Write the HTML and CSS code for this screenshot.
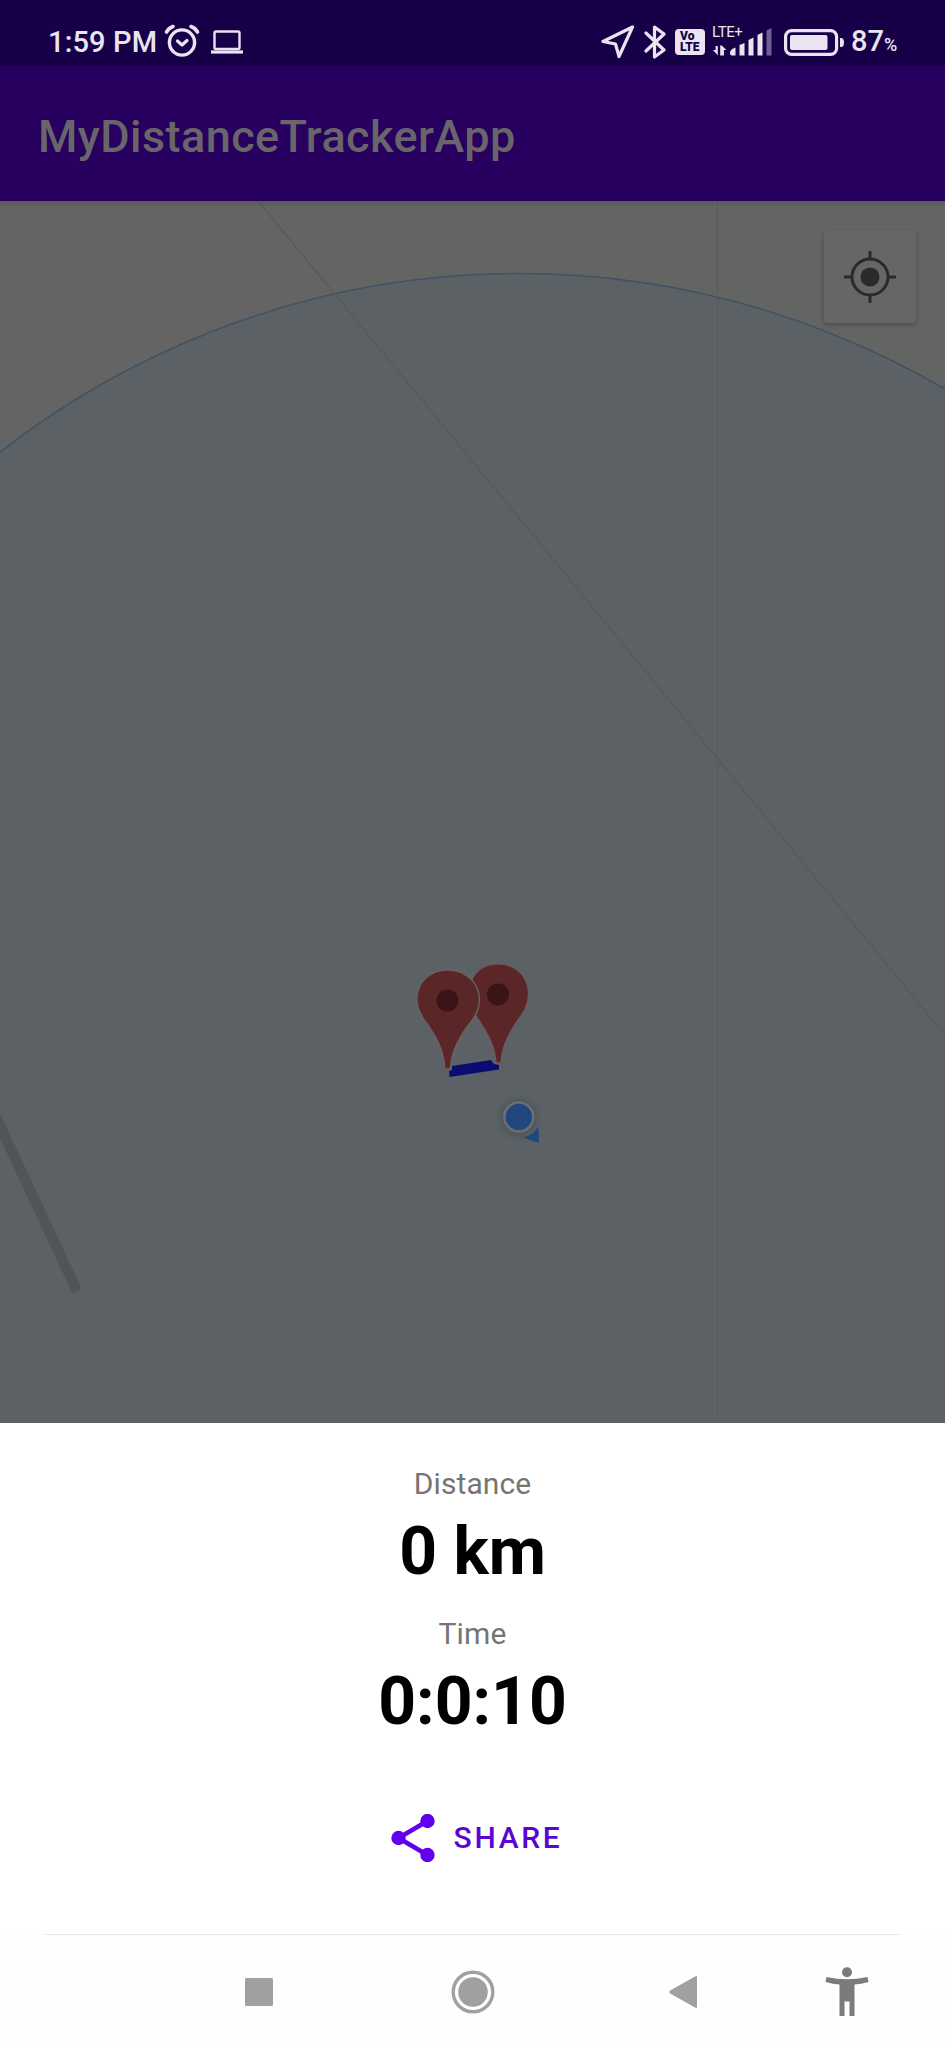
FILE: index.html
```html
<!DOCTYPE html>
<html lang="en">
<head>
<meta charset="utf-8">
<title>MyDistanceTrackerApp</title>
<link rel="stylesheet" href="styles.css">
</head>
<body>
<div class="screen">
  <header class="status">
    <span class="clock">1:59 PM</span>
    <svg class="alarm" width="36" height="34" viewBox="0 0 36 34" fill="none" stroke="#e9e4f0" stroke-linecap="round">
      <circle cx="18" cy="18.500" r="12.600" stroke-width="3.400"/>
      <path d="M2.500 8C4 5.500 6 3.500 9 2.500M33.500 8C32 5.500 30 3.500 27 2.500" stroke-width="3.600"/>
      <path d="M13.500 17l4.500 4 5-4.500" stroke-width="3.200" stroke-linejoin="round"/>
    </svg>
    <svg class="laptop" width="32" height="24" viewBox="0 0 32 24" fill="none" stroke="#e9e4f0">
      <rect x="3.500" y="1.500" width="25" height="17.500" rx="1.500" stroke-width="2.400"/>
      <path d="M0 22h32" stroke-width="3.200"/>
    </svg>
    <span class="spacer"></span>
    <svg class="location" width="34" height="34" viewBox="0 0 34 34" fill="none" stroke="#e9e4f0" stroke-width="3.200" stroke-linejoin="round">
      <path d="M31.500 2L2 16.500l12.500 2.500 3.500 12.500z"/>
    </svg>
    <svg class="bluetooth" width="22" height="34" viewBox="0 0 22 34" fill="none" stroke="#e9e4f0" stroke-width="3.200" stroke-linejoin="round" stroke-linecap="round">
      <path d="M2 8l18 17-9.500 7V2l9.500 7L2 26"/>
    </svg>
    <span class="volte"><span>Vo</span><span>LTE</span></span>
    <span class="mobile">
      <span class="network">LTE+</span>
      <svg width="59" height="28" viewBox="0 0 59 28" fill="#e9e4f0">
        <path d="M0 22h2.600v-4h2.200v9.500zM7.200 17.500h2v.5l4.300 4h-2.600v5.500H7.200z"/>
        <path d="M17 25q0-4 5.500-5.500v8H19q-2 0-2-2.500zM26.500 17l5-2v12.500h-5zM35.500 12l5-2.500v18h-5zM44.500 7l5-2.500v23h-5z"/>
        <path d="M53.500 2.500L58.500 0v27.500h-5z" fill="#6f6093"/>
      </svg>
    </span>
    <svg class="battery" width="60" height="27" viewBox="0 0 60 27" fill="#e9e4f0">
      <rect x="1.600" y="1.600" width="51" height="23.800" rx="6" fill="none" stroke="#e9e4f0" stroke-width="3.200"/>
      <rect x="6" y="6" width="37.500" height="15" rx="2"/>
      <path d="M56 9h1q3 0 3 4.500T57 18h-1z"/>
    </svg>
    <span class="charge">87<small>%</small></span>
  </header>

  <div class="appbar"><h1>MyDistanceTrackerApp</h1></div>

  <main class="map">
    <svg class="canvas" width="945" height="1222" viewBox="0 201 945 1222">
      <rect y="201" width="945" height="1222" fill="#646464"/>
      <path d="M258 201H945V1035z" fill="#636563"/>
      <circle cx="519" cy="1116" r="842.500" fill="#5b6164" stroke="#405365" stroke-width="1.600"/>
      <path d="M258 201L945 1035" stroke="#535a5b" stroke-width="1.100" fill="none"/>
      <path d="M717.500 201V1423" stroke="#565c5e" stroke-width="1" fill="none"/>
      <path d="M-6 1113L77 1291" stroke="#505658" stroke-width="10.500"/>
      <path d="M0 1334L70 1300" stroke="#585e61"/>
      <g fill="#5a2627" stroke="#715b5d" stroke-width="1">
        <path d="M496 1062C495.500 1045 485 1029 475 1014C462 991 472 964 498 964S537 991 522 1014C511 1029 501.500 1045 501 1062Q498.500 1064 496 1062z"/>
        <path d="M444.500 1068C444.500 1050 434.500 1034 423.500 1019C408 995 422 970 447.500 970S489 995 473 1019C461 1034 451 1050 450.500 1068Q447.500 1070 444.500 1068z" stroke="#6b6263" stroke-width="1.400"/>
      </g>
      <circle cx="498" cy="994.500" r="11" fill="#3b1418"/>
      <circle cx="447.500" cy="1000.500" r="11" fill="#3b1418"/>
      <path d="M452 1066l39-6 3 4 5 1v4.500l-49.500 7.500-.5-6 3-1z" fill="#0b0c71"/>
      <circle class="halo" cx="518.500" cy="1117.500" r="18" fill="#4b5356"/>
      <path d="M538.500 1126.500l.5 16.500-16-5.500q10-2 15.500-11z" fill="#224681"/>
      <circle cx="518.800" cy="1117" r="14.500" fill="#22477f" stroke="#6d6e70" stroke-width="2.600"/>
    </svg>
    <button class="locate" aria-label="My location">
      <svg width="52" height="52" viewBox="0 0 52 52" fill="none" stroke="#2a2a2a" stroke-width="3">
        <circle cx="26" cy="26" r="18"/>
        <circle cx="26" cy="26" r="9.500" fill="#2a2a2a" stroke="none"/>
        <path d="M26 0v8M26 44v8M0 26h8M44 26h8"/>
      </svg>
    </button>
  </main>

  <section class="sheet">
    <div class="label">Distance</div>
    <div class="value">0 km</div>
    <div class="label second">Time</div>
    <div class="value">0:0:10</div>
    <button class="share">
      <svg width="44" height="48" viewBox="0 0 44 48" fill="#6200ee">
        <path d="M36.500 7L7.500 24l29 17" fill="none" stroke="#6200ee" stroke-width="4.600"/>
        <circle cx="36.500" cy="7" r="7.200"/><circle cx="7.500" cy="24" r="7.200"/><circle cx="36.500" cy="41" r="7.200"/>
      </svg>
      <span>SHARE</span>
    </button>
  </section>

  <nav class="navbar">
    <svg class="recent" width="28" height="28" viewBox="0 0 28 28"><rect width="28" height="28" rx="1.500" fill="#a0a0a0"/></svg>
    <svg class="home" width="44" height="44" viewBox="0 0 44 44"><circle cx="22" cy="22" r="19.800" fill="none" stroke="#a0a0a0" stroke-width="3.400"/><circle cx="22" cy="22" r="14.800" fill="#a0a0a0"/></svg>
    <svg class="back" width="29" height="34" viewBox="0 0 29 34"><path d="M2 16L27 2v30L2 18q-1-1 0-2z" fill="#a0a0a0" stroke="#a0a0a0" stroke-width="2" stroke-linejoin="round"/></svg>
    <svg class="access" width="44" height="49" viewBox="0 0 44 49" fill="#7b7b7b"><circle cx="22" cy="5.200" r="5"/><path d="M1.500 10Q22 14.500 42.500 10l1 5Q36 17 29.500 17.500V49h-5V34.500h-5V49h-5V17.500Q8 17 .5 15z"/></svg>
  </nav>
</div>
</body>
</html>
```

FILE: styles.css
```css
* { box-sizing: border-box; }
body { margin: 0; background: #fefefe; font-family: Roboto, "Liberation Sans", sans-serif; }
button { border: 0; padding: 0; font: inherit; background: none; }
svg { display: block; flex: none; }
.screen { width: 945px; height: 2048px; display: flex; flex-direction: column; overflow: hidden; }

.status { height: 66px; flex: none; display: flex; align-items: center; padding: 18px 47px 0 48px; background: #170048; color: #e9e4f0; white-space: nowrap; }
.clock { width: 116px; font-size: 29px; font-weight: 500; line-height: 34px; letter-spacing: .15px; }
.alarm { margin: -2px 11px 0 0; }
.spacer { flex: 1; }
.location { margin-right: 9px; }
.bluetooth { margin: -1px 9px 0 0; }
.volte { width: 30px; height: 26px; margin-right: 8px; padding: 2px 0 0 5px; border-radius: 4px; background: #e9e4f0; color: #170048; font-size: 12px; line-height: 11px; font-weight: 900; display: flex; flex-direction: column; }
.mobile { position: relative; width: 59px; margin-right: 12px; }
.network { position: absolute; left: -1px; top: -3px; font-size: 15px; line-height: 15px; letter-spacing: -.4px; }
.battery { margin-right: 7px; }
.charge { width: 47px; padding-top: 1px; font-size: 29px; font-weight: 500; line-height: 34px; }
.charge small { font-size: 18px; }

.appbar { height: 135px; flex: none; display: flex; align-items: center; padding: 6px 38px 0; background: #28005f; }
.appbar h1 { margin: 0; font-size: 45px; line-height: 54px; font-weight: 500; letter-spacing: .43px; color: #69666b; white-space: nowrap; }

.map { position: relative; height: 1222px; flex: none; background: #646464; }
.map::after { content: ""; position: absolute; left: 0; right: 0; top: 0; height: 6px; background: linear-gradient(#50505099, #50505000); }
.halo { filter: blur(3px); }
.locate { position: absolute; top: 30px; right: 29px; width: 92px; height: 92px; border-radius: 3px; background: #666; box-shadow: 0 2px 4px #3d3d3daa; display: flex; align-items: center; justify-content: center; }

.sheet { height: 511px; flex: none; display: flex; flex-direction: column; align-items: center; padding-top: 43px; background: #fff; }
.label { font-size: 30px; line-height: 36px; color: #757575; letter-spacing: .1px; }
.label.second { margin-top: 25px; }
.value { margin-top: 11px; font-size: 66px; line-height: 78px; font-weight: 700; color: #000; white-space: nowrap; }
.share { display: flex; align-items: center; gap: 19px; margin: 73px 0 0 8px; color: #5b04d5; font-size: 30px; font-weight: 500; letter-spacing: 2.7px; line-height: 36px; }

.navbar { height: 114px; flex: none; display: flex; align-items: center; margin: 0 45px; padding: 0 32px 0 200px; border-top: 1px solid #e6e6e6; }
.home { margin-left: 178px; }
.back { margin-left: 174px; }
.access { margin-left: 127px; }
```
